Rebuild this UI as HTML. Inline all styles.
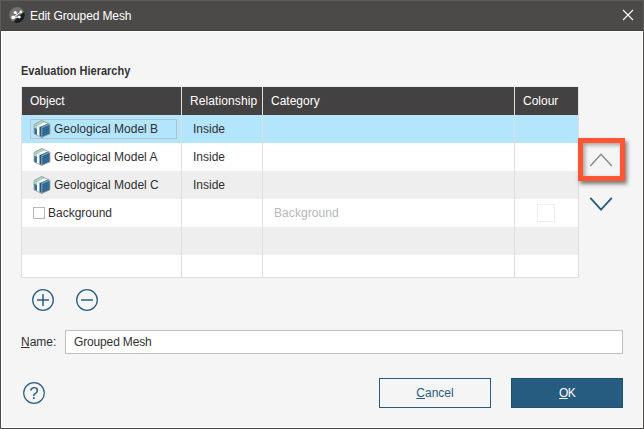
<!DOCTYPE html>
<html lang="en">
<head>
<meta charset="utf-8">
<title>Edit Grouped Mesh</title>
<style>
  html, body { margin: 0; padding: 0; }
  body {
    width: 644px; height: 429px; overflow: hidden; position: relative;
    background: #f5f5f5;
    font-family: "Liberation Sans", sans-serif;
    font-size: 12px; color: #303030;
  }
  .abs { position: absolute; }
  .t { position: absolute; white-space: nowrap; line-height: 14px; }
  #frame { left: 0; top: 0; width: 642px; height: 427px; border: 1px solid #4b4a48; box-sizing: content-box; pointer-events: none; }
  #frametop { left: 0; top: 0; width: 642px; height: 30px; border: 1px solid #5c5b59; border-bottom: none; }
  #inner { left: 1px; top: 31px; width: 640px; height: 395px; border: 1px solid #ffffff; }
  #titlebar { left: 0; top: 0; width: 644px; height: 30px; background: #4b4a48; border-bottom: 1px solid #403f3d; }
  #title { left: 30px; top: 9px; color: #ffffff; font-size: 12px; letter-spacing: -0.12px; }
  #heading { left: 21px; top: 64px; font-weight: bold; color: #333333; transform: scaleX(0.915); transform-origin: 0 0; }
  #table { left: 21px; top: 86px; width: 556px; height: 190px; background: #ffffff; border: 1px solid #dedede; border-top-color: #ececec; box-sizing: content-box; }
  #thead { left: 22px; top: 87px; width: 556px; height: 28px; background: #444142; }
  .row { left: 22px; width: 556px; height: 28px; }
  .sep { top: 87px; width: 1px; height: 190px; background: #dfdfdf; }
  .hd { color: #ffffff; top: 94px; }
  .btn { top: 378px; width: 110px; height: 28px; border: 1px solid #265c80; text-align: center; line-height: 28px; }
  u { text-decoration: underline; text-underline-offset: 1px; }
</style>
</head>
<body>
  <div id="titlebar" class="abs"></div>
  <svg class="abs" style="left:9px;top:7px" width="16" height="16" viewBox="0 0 16 16">
    <circle cx="8" cy="8" r="7.9" fill="#717171"/>
    <path d="M15.2 5 A7.9 7.9 0 0 1 4.4 15 Q8.5 10 15.2 5 Z" fill="#1c1c1e"/>
    <g stroke="#ffffff" stroke-width="1" fill="#ffffff" stroke-linecap="round">
      <line x1="4.2" y1="10.4" x2="11.9" y2="4.9"/>
      <line x1="4.2" y1="10.4" x2="10.4" y2="10.1"/>
      <line x1="6.2" y1="5.5" x2="8" y2="7.6"/>
      <circle cx="4.2" cy="10.4" r="1.9" stroke="none"/>
      <circle cx="6.2" cy="5.5" r="1.6" stroke="none"/>
      <circle cx="11.9" cy="4.9" r="1.35" stroke="none"/>
      <circle cx="10.4" cy="10.1" r="1.35" stroke="none"/>
    </g>
  </svg>
  <div id="title" class="t">Edit Grouped Mesh</div>
  <svg class="abs" style="left:622px;top:9px" width="12" height="12" viewBox="0 0 12 12">
    <path d="M1 1 L11 11 M11 1 L1 11" stroke="#ffffff" stroke-width="1.1" fill="none"/>
  </svg>
  <div id="inner" class="abs"></div>

  <div id="heading" class="t">Evaluation Hierarchy</div>

  <div id="table" class="abs"></div>
  <div id="thead" class="abs"></div>
  <div class="abs row" style="top:115px;background:#b3e5fc"></div>
  <div class="abs row" style="top:171px;background:#eeeeee"></div>
  <div class="abs row" style="top:227px;background:#eeeeee"></div>
  <div class="abs sep" style="left:181px"></div>
  <div class="abs sep" style="left:262px"></div>
  <div class="abs sep" style="left:514px"></div>

  <div class="t hd" style="left:30px">Object</div>
  <div class="t hd" style="left:190px;letter-spacing:0.1px">Relationship</div>
  <div class="t hd" style="left:271px">Category</div>
  <div class="t hd" style="left:523px">Colour</div>

  <div class="abs" style="left:30px;top:119px;width:145px;height:18px;border:1px solid #afc3cd"></div>

  <svg class="abs cube" style="left:33px;top:120px" width="18" height="18" viewBox="0 0 18 18">
        <polygon points="8.75,0.4 17,4.3 17,13.8 8.7,17.4 1,13.8 1,4.5" fill="#24608c"/>
        <polygon points="1,4.5 8.75,0.4 11.89,1.88 3.96,5.72" fill="#a9d8bd"/>
        <polygon points="3.96,5.72 11.89,1.88 15.19,3.44 7.08,7" fill="#ffffff"/>
        <polygon points="7.08,7 15.19,3.44 17,4.3 8.8,7.7" fill="#4a82aa"/>
        <polygon points="1,4.5 3.96,5.72 3.96,9.1 1,7.9" fill="#a9d8bd"/>
        <polygon points="1,7.9 3.96,9.1 3.96,15.17 1,13.8" fill="#32709b"/>
        <polygon points="3.96,5.72 6.7,6.85 6.7,16.43 3.96,15.17" fill="#ffffff"/>
        <polygon points="6.7,6.85 8.8,7.7 8.7,17.4 6.7,16.43" fill="#1f5a86"/>
        <polygon points="8.8,7.7 17,4.3 17,13.8 8.7,17.4" fill="#27628e"/>
        <path d="M8.8 10.2 L17 6.8 M8.8 12.6 L17 9.2 M8.8 15 L17 11.5" stroke="#4f86ad" stroke-width="0.5" fill="none"/>
        <polygon points="8.75,0.4 17,4.3 17,13.8 8.7,17.4 1,13.8 1,4.5" fill="none" stroke="#a6a6a6" stroke-width="0.9"/>
        <path d="M8.8 7.7 L17 4.3" stroke="#b9c6cf" stroke-width="0.7" fill="none"/>
        <path d="M8.8 7.7 L8.7 17.4" stroke="#9fa9b0" stroke-width="0.9" fill="none"/>
  </svg>
  <svg class="abs cube" style="left:33px;top:148px" width="18" height="18" viewBox="0 0 18 18">
        <polygon points="8.75,0.4 17,4.3 17,13.8 8.7,17.4 1,13.8 1,4.5" fill="#24608c"/>
        <polygon points="1,4.5 8.75,0.4 11.89,1.88 3.96,5.72" fill="#a9d8bd"/>
        <polygon points="3.96,5.72 11.89,1.88 15.19,3.44 7.08,7" fill="#ffffff"/>
        <polygon points="7.08,7 15.19,3.44 17,4.3 8.8,7.7" fill="#4a82aa"/>
        <polygon points="1,4.5 3.96,5.72 3.96,9.1 1,7.9" fill="#a9d8bd"/>
        <polygon points="1,7.9 3.96,9.1 3.96,15.17 1,13.8" fill="#32709b"/>
        <polygon points="3.96,5.72 6.7,6.85 6.7,16.43 3.96,15.17" fill="#ffffff"/>
        <polygon points="6.7,6.85 8.8,7.7 8.7,17.4 6.7,16.43" fill="#1f5a86"/>
        <polygon points="8.8,7.7 17,4.3 17,13.8 8.7,17.4" fill="#27628e"/>
        <path d="M8.8 10.2 L17 6.8 M8.8 12.6 L17 9.2 M8.8 15 L17 11.5" stroke="#4f86ad" stroke-width="0.5" fill="none"/>
        <polygon points="8.75,0.4 17,4.3 17,13.8 8.7,17.4 1,13.8 1,4.5" fill="none" stroke="#a6a6a6" stroke-width="0.9"/>
        <path d="M8.8 7.7 L17 4.3" stroke="#b9c6cf" stroke-width="0.7" fill="none"/>
        <path d="M8.8 7.7 L8.7 17.4" stroke="#9fa9b0" stroke-width="0.9" fill="none"/>
  </svg>
  <svg class="abs cube" style="left:33px;top:176px" width="18" height="18" viewBox="0 0 18 18">
        <polygon points="8.75,0.4 17,4.3 17,13.8 8.7,17.4 1,13.8 1,4.5" fill="#24608c"/>
        <polygon points="1,4.5 8.75,0.4 11.89,1.88 3.96,5.72" fill="#a9d8bd"/>
        <polygon points="3.96,5.72 11.89,1.88 15.19,3.44 7.08,7" fill="#ffffff"/>
        <polygon points="7.08,7 15.19,3.44 17,4.3 8.8,7.7" fill="#4a82aa"/>
        <polygon points="1,4.5 3.96,5.72 3.96,9.1 1,7.9" fill="#a9d8bd"/>
        <polygon points="1,7.9 3.96,9.1 3.96,15.17 1,13.8" fill="#32709b"/>
        <polygon points="3.96,5.72 6.7,6.85 6.7,16.43 3.96,15.17" fill="#ffffff"/>
        <polygon points="6.7,6.85 8.8,7.7 8.7,17.4 6.7,16.43" fill="#1f5a86"/>
        <polygon points="8.8,7.7 17,4.3 17,13.8 8.7,17.4" fill="#27628e"/>
        <path d="M8.8 10.2 L17 6.8 M8.8 12.6 L17 9.2 M8.8 15 L17 11.5" stroke="#4f86ad" stroke-width="0.5" fill="none"/>
        <polygon points="8.75,0.4 17,4.3 17,13.8 8.7,17.4 1,13.8 1,4.5" fill="none" stroke="#a6a6a6" stroke-width="0.9"/>
        <path d="M8.8 7.7 L17 4.3" stroke="#b9c6cf" stroke-width="0.7" fill="none"/>
        <path d="M8.8 7.7 L8.7 17.4" stroke="#9fa9b0" stroke-width="0.9" fill="none"/>
  </svg>

  <div class="t" style="left:54px;top:122px">Geological Model B</div>
  <div class="t" style="left:54px;top:150px">Geological Model A</div>
  <div class="t" style="left:54px;top:178px">Geological Model C</div>
  <div class="t" style="left:193px;top:122px">Inside</div>
  <div class="t" style="left:193px;top:150px">Inside</div>
  <div class="t" style="left:193px;top:178px">Inside</div>

  <div class="abs" style="left:33px;top:207px;width:10px;height:10px;border:1px solid #b8b8b8;background:#fff"></div>
  <div class="t" style="left:48px;top:206px">Background</div>
  <div class="t" style="left:274px;top:206px;color:#b7b7b7;letter-spacing:0.08px">Background</div>
  <div class="abs" style="left:537px;top:204px;width:16px;height:16px;border:1px solid #eeeeee;background:#fff"></div>

  <!-- red highlight + up arrow -->
  <div class="abs" style="left:578px;top:138px;width:37px;height:33px;border:5px solid #ff5533;box-shadow:2px 3px 4px rgba(0,0,0,0.5), inset 2px 2px 4px rgba(0,0,0,0.35)"></div>
  <svg class="abs" style="left:586px;top:150px" width="30" height="20" viewBox="0 0 30 20">
    <path d="M4.3 16 L15 4.2 L25.8 16" stroke="#8a8a8a" stroke-width="1.4" fill="none"/>
  </svg>
  <svg class="abs" style="left:586px;top:194px" width="30" height="20" viewBox="0 0 30 20">
    <path d="M4.3 3.9 L15 15.7 L25.8 3.9" stroke="#265c80" stroke-width="1.8" fill="none"/>
  </svg>

  <!-- plus / minus -->
  <svg class="abs" style="left:31px;top:288px" width="24" height="24" viewBox="0 0 24 24">
    <circle cx="12" cy="12" r="10.3" fill="none" stroke="#2a5f85" stroke-width="1.3"/>
    <path d="M6 12 H18 M12 6 V18" stroke="#2a5f85" stroke-width="1.5" fill="none"/>
  </svg>
  <svg class="abs" style="left:75px;top:288px" width="24" height="24" viewBox="0 0 24 24">
    <circle cx="12" cy="12" r="10.3" fill="none" stroke="#2a5f85" stroke-width="1.3"/>
    <path d="M6 12 H18" stroke="#2a5f85" stroke-width="1.5" fill="none"/>
  </svg>

  <div class="t" style="left:21px;top:335px"><u>N</u>ame:</div>
  <div class="abs" style="left:65px;top:330px;width:556px;height:22px;border:1px solid #c0c0c0;background:#fff"></div>
  <div class="t" style="left:74px;top:335px;letter-spacing:-0.15px">Grouped Mesh</div>

  <!-- help -->
  <svg class="abs" style="left:22px;top:381px;will-change:transform" width="24" height="24" viewBox="0 0 24 24">
    <circle cx="12" cy="12" r="10.3" fill="none" stroke="#2a5f85" stroke-width="1.2"/>
    <text x="12" y="17.9" text-anchor="middle" font-family="Liberation Sans, sans-serif" font-size="16.5" fill="#2a5f85" stroke="#2a5f85" stroke-width="0.1">?</text>
  </svg>

  <div class="abs btn" style="left:379px;color:#265c80"><u>C</u>ancel</div>
  <div class="abs btn" style="left:511px;background:#265c80;color:#ffffff;border-color:#1f5072;letter-spacing:-0.8px"><u>O</u>K</div>

  <div id="frame" class="abs"></div>
  <div id="frametop" class="abs"></div>
</body>
</html>
